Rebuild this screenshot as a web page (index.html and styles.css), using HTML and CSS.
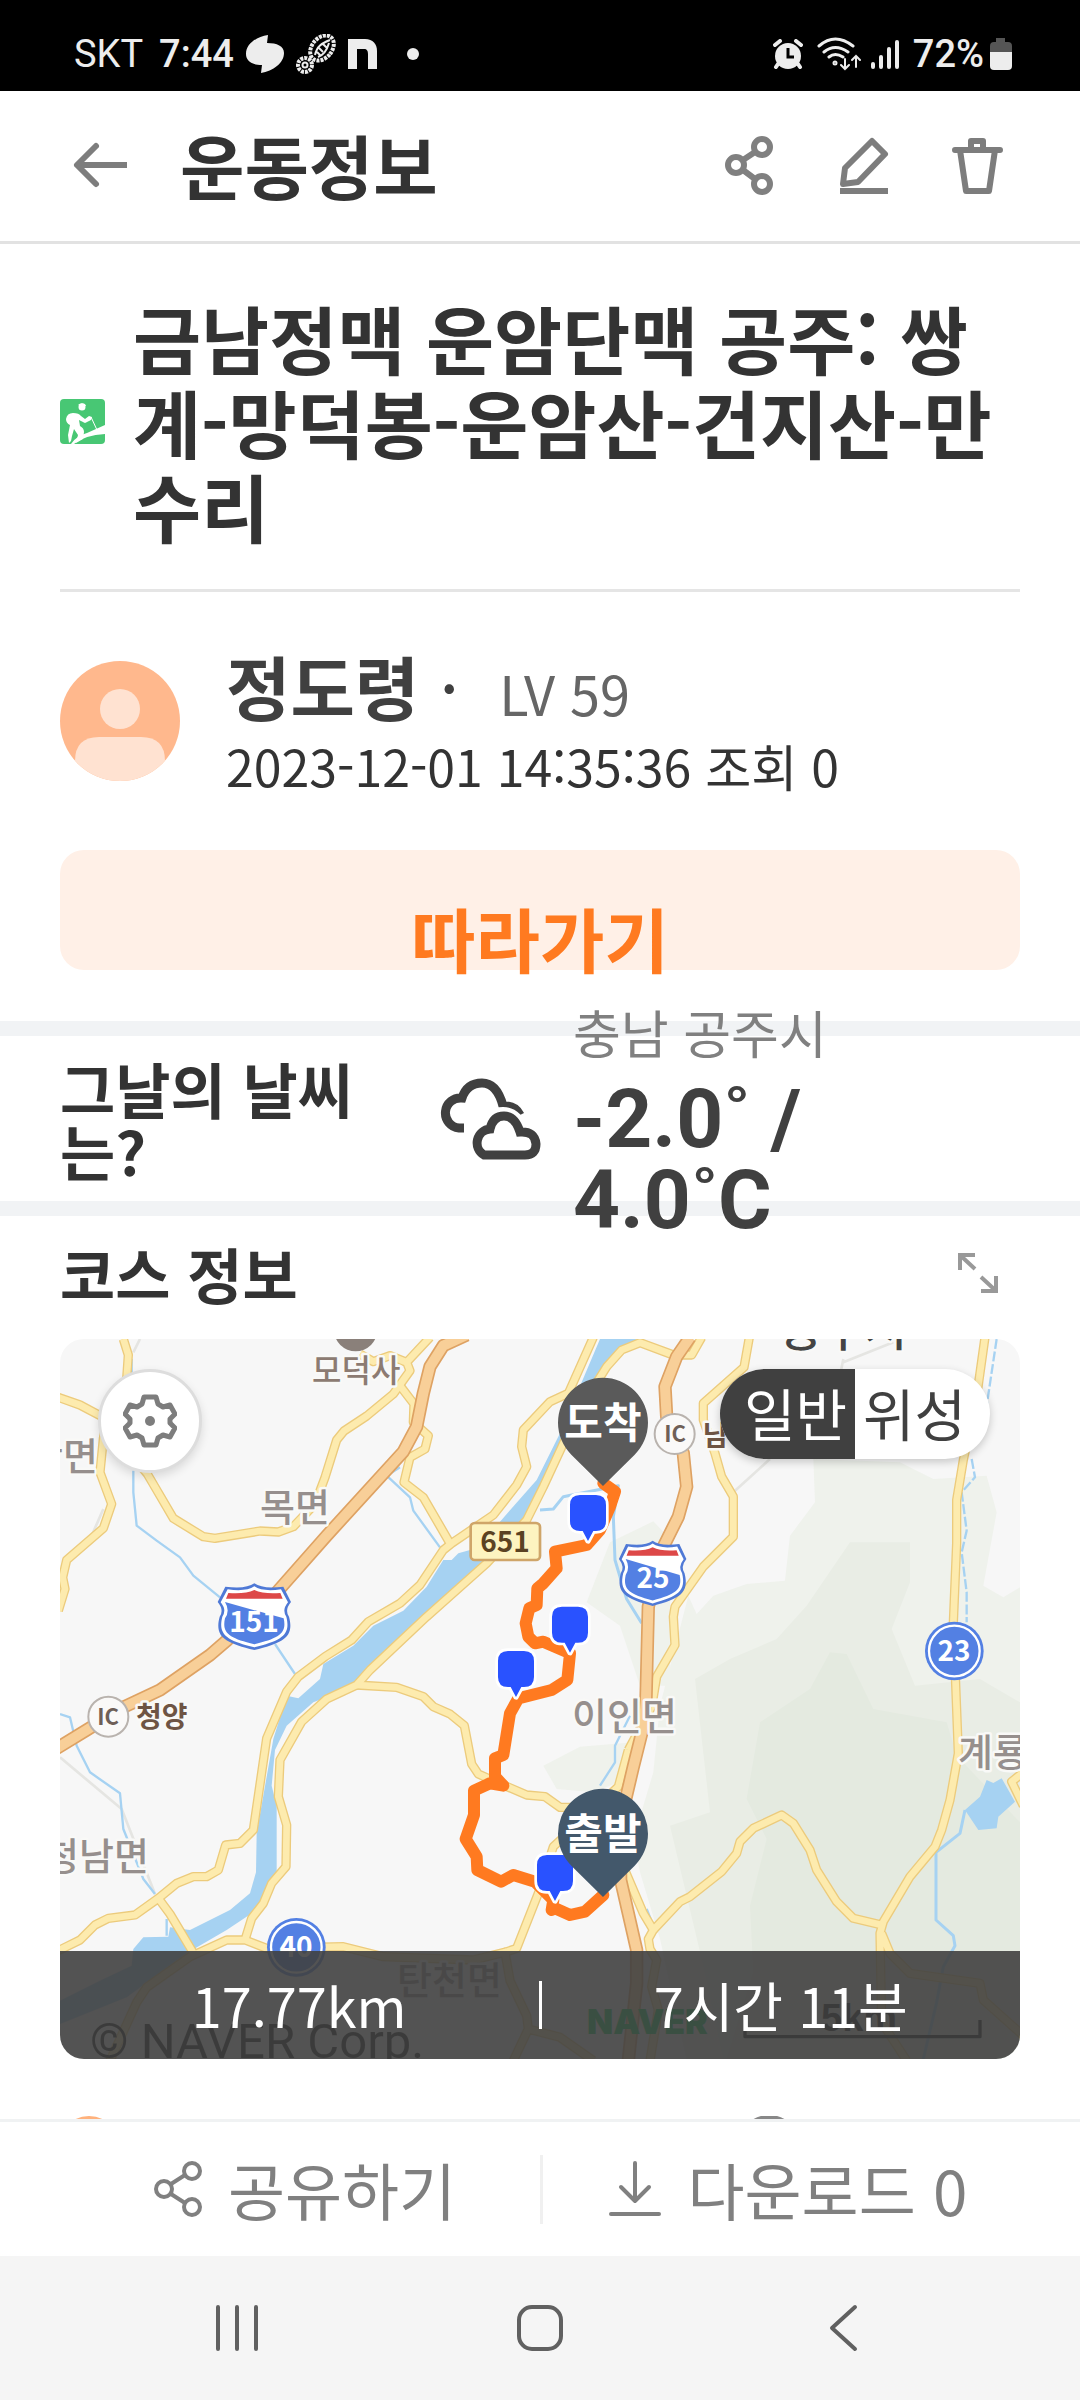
FILE: index.html
```html
<!DOCTYPE html>
<html lang="ko">
<head>
  <meta charset="UTF-8">
  <meta name="viewport" content="width=device-width, initial-scale=1.0">
  <title>운동정보</title>
  <link rel="stylesheet" href="styles.css">
</head>
<body>

  <!-- Phone status bar -->
  <div class="status-bar">
    <div class="status-left">
      <span class="carrier">SKT</span>
      <span class="clock">7:44</span>
      <svg class="status-icon" width="40" height="38" viewBox="0 0 40 38"><path d="M23 0C11 2 1 9 1 19c0 7 6 11 16 11l-1 8c12-2 23-10 23-20 0-7-7-10-17-10z" fill="#ededed"/></svg>
      <svg class="status-icon" width="40" height="40" viewBox="0 0 40 40" fill="none" stroke="#ededed">
        <ellipse cx="26" cy="14" rx="10" ry="14" transform="rotate(40 26 14)" stroke-width="4" stroke-dasharray="3 1"/>
        <path d="M19 21C21 12 26 9 34 6M22 23c6-2 9-7 11-14M23 14l4 4M27 10l4 4M21 18l3 3" stroke-width="2"/>
        <circle cx="9" cy="31" r="7" stroke-width="4" stroke-dasharray="3 1"/>
        <circle cx="9" cy="31" r="2.500" stroke-width="2"/>
      </svg>
      <svg class="status-icon" width="32" height="30" viewBox="0 0 32 30"><path d="M1 30V0h17c8 0 12 5 12 12v18h-9V15c0-3-1-5-4-5h-7v20z" fill="#ededed"/></svg>
      <span class="more-dot"></span>
    </div>
    <div class="status-right">
      <svg width="30" height="30" viewBox="0 0 30 30">
        <circle cx="15" cy="17" r="13" fill="#ededed"/>
        <path d="M2 6l5-4M28 6l-5-4M5 25l-2 3M25 25l2 3" stroke="#ededed" stroke-width="4" stroke-linecap="round"/>
        <path d="M15 9v9h6" fill="none" stroke="#000" stroke-width="3"/>
      </svg>
      <svg class="wifi" width="44" height="34" viewBox="0 0 44 34" fill="none" stroke="#ededed" stroke-width="3" stroke-linecap="round">
        <path d="M2 9q16-14 34 0M7 15q11-9 24 0M12 20q6-5 14 0"/>
        <circle cx="18" cy="26" r="1"/>
        <path d="M28 22v10m-4-4l4 4 4-4M39 30V19m-4 4l4-4 4 4" stroke-width="2"/>
      </svg>
      <svg width="28" height="30" viewBox="0 0 28 30" stroke="#ededed" stroke-width="4" stroke-linecap="round"><path d="M2 25v3M10 18v10M18 10v18M26 3v25"/></svg>
      <span class="battery-level">72%</span>
      <svg width="22" height="32" viewBox="0 0 22 32"><path d="M6 0h9v4h3q4 0 4 4v6H0V8q0-4 4-4h2z" fill="#555"/><path d="M0 14h22v14q0 4-4 4H4q-4 0-4-4z" fill="#ededed"/></svg>
    </div>
  </div>

  <header class="app-bar">
    <button class="icon-button back" aria-label="뒤로">
      <svg width="56" height="56" viewBox="0 0 56 56" fill="none" stroke="#7d7d7d" stroke-width="6" stroke-linejoin="round"><path d="M55 28H6"/><path d="M24 9L5 28l19 19" stroke-linecap="round"/></svg>
    </button>
    <h1>운동정보</h1>
    <div class="actions">
      <button class="icon-button" aria-label="공유">
        <svg width="60" height="60" viewBox="0 0 60 60" fill="none" stroke="#808080" stroke-width="6"><circle cx="42" cy="12" r="8"/><circle cx="16" cy="30" r="8"/><circle cx="42" cy="49" r="8"/><path d="M35 17L23 25M23 35l12 9"/></svg>
      </button>
      <button class="icon-button" aria-label="수정">
        <svg width="60" height="60" viewBox="0 0 60 60" fill="none" stroke="#7d7d7d" stroke-width="6" stroke-linejoin="round"><path d="M38 6l13 13-27 28-15 2 2-16zM6 56h48"/></svg>
      </button>
      <button class="icon-button" aria-label="삭제">
        <svg width="60" height="60" viewBox="0 0 60 60" fill="none" stroke="#7d7d7d" stroke-width="6" stroke-linecap="round" stroke-linejoin="round"><path d="M7 15h45M12 15l6 41h23l6-41M23 14V6h12v8"/></svg>
      </button>
    </div>
  </header>

  <main>
    <section class="summary">
      <div class="course-title">
        <svg class="hiking" width="45" height="45" viewBox="0 0 45 45">
          <rect width="45" height="45" rx="4" fill="#48c774"/>
          <g fill="#fff">
            <circle cx="22" cy="8" r="3.500"/>
            <path d="M18 6q3-3 7-1l1 2h-5z"/>
            <path d="M6 20q1-6 7-6 6 0 8 3l4 3 4-3 3 1-1 3-6 3-6-3 1 6q4 2 4 6l-1 7-7 4 2-8-4-6-2 7-1 5-2 2-1-8 2-10q-4-2-4-6z"/>
            <path d="M11 45q5-8 16-11L45 26v9q-20 1-31 10z"/>
          </g>
          <path d="M31 18l6 13" stroke="#fff"/>
        </svg>
        <h2>금남정맥 운암단맥 공주: 쌍계-망덕봉-운암산-건지산-만수리</h2>
      </div>

      <div class="profile">
        <svg class="avatar" width="120" height="120" viewBox="0 0 120 120">
          <clipPath id="avatarClip"><circle cx="60" cy="60" r="60"/></clipPath>
          <g clip-path="url(#avatarClip)">
            <rect width="120" height="120" fill="#ffb88d"/>
            <circle cx="60" cy="48" r="20" fill="#ffe2d1"/>
            <path d="M15 120v-20q0-24 24-24h42q24 0 24 24v20z" fill="#ffe2d1"/>
          </g>
        </svg>
        <div class="profile-text">
          <p class="profile-name"><strong>정도령</strong><span class="middot">·</span><span class="level">LV 59</span></p>
          <p class="profile-meta">2023-12-01 14:35:36 조회 0</p>
        </div>
      </div>

      <button class="follow">따라가기</button>
    </section>

    <section class="weather">
      <h3>그날의 날씨는?</h3>
      <svg width="102" height="82" viewBox="0 0 102 82" fill="none" stroke="#404040" stroke-width="9">
        <path d="M25 50h-5a15 15 0 0 1 3-30Q28 5 43 5t21 23q12-1 17 9" />
        <path d="M45 77a15 15 0 0 1 4-28q4-11 15-11t18 16q15-1 15 12 0 11-11 11z" fill="#fff" stroke="#fff" stroke-width="18"/>
        <path d="M45 77a14 14 0 0 1 6-26q3-13 14-13t16 16q15-1 16 12 0 11-11 11z"/>
      </svg>
      <div class="weather-text">
        <p class="place">충남 공주시</p>
        <p class="temp">-2.0˚ / 4.0˚C</p>
      </div>
    </section>

    <section class="course">
      <div class="section-head">
        <h3>코스 정보</h3>
        <button class="icon-button" aria-label="크게 보기">
          <svg width="42" height="42" viewBox="0 0 42 42" fill="none" stroke="#999" stroke-width="4"><path d="M3 18V3h15M4 4l14 13M39 24v15H24M38 38L24 25"/></svg>
        </button>
      </div>

      <div class="map">
        <svg class="map-canvas" viewBox="0 0 960 720">
          <defs>
            <g id="shield">
              <path d="M0-100Q-25-82-87-90L-110-44Q-90-20-104 0C-120 60-90 78 0 100 90 78 120 60 104 0Q90-20 110-44L87-90Q25-82 0-100z" fill="#4f79d6"/>
              <path d="M0-91Q-25-74-80-82L-101-43Q-82-20-96 0C-110 55-82 71 0 92 82 71 110 55 96 0Q82-20 101-43L80-82Q25-74 0-91z" fill="#fff"/>
              <path d="M-88-44Q-72-18-88 5C-98 50-75 64 0 83 75 64 98 50 88 5 72-18 88-44z" fill="#5380e3"/>
              <path d="M-85-54l7-17Q-28-67 0-80 28-67 78-71l7 17z" fill="#dd4848"/>
            </g>
            <g id="waypoint">
              <path d="M-24-140h48q30 0 30 30v48q0 30-30 30h-8L0-2l-16-30h-8q-30 0-30-30v-48q0-30 30-30z" fill="#2952ff" stroke="#fff" stroke-width="16" paint-order="stroke" stroke-linejoin="round"/>
            </g>
            <path id="marker" d="M0 0L-95-94A135 135 0 1 1 95-94z"/>
            <g id="roads">
              <path d="M190 0L205 48 200 120 140 230 130 300 120 400 155 495 130 568 20 663 8 715 15 750-5 815M-5 175L60 198 130 235"/>
              <path d="M200 330L262 405 340 538 430 593 465 598 600 576 655 579 700 563 765 495 795 415 830 303 852 276 920 231 1000 165 1050 95 1040 70 1110-5M900 45L940 68 990 50 1040 70"/>
              <path d="M1020 140L1062 195 1060 250 1105 290 1095 330 1050 355 1032 430 1090 475 1170 613"/>
              <path d="M1600-5L1525 163 1470 188 1390 273 1385 323 1400 383 1370 438 1300 528 1175 613 1150 633 1080 738 1020 793 925 848 875 903 795 953 715 1013 680 1058 620 1198 580 1473 540 1513 497 1518 475 1593 440 1613 400 1613 350 1633 295 1678 225 1728 145 1738 105 1758 60 1803-5 1835M295 1678L330 1725 405 1850"/>
              <path d="M1925-5L1895 48 1840 48 1740 11 1685 33 1640 83 1590 163 1515 303 1450 443 1400 543 1280 673 1100 833 930 993 890 1038 800 1080 725 1148 660 1263 655 1373 680 1458 678 1583 635 1633 610 1693 575 1738 555 1803"/>
              <path d="M890 1038L1010 1045 1090 1073 1120 1103 1170 1125 1213 1160 1235 1275 1255 1305 1300 1325 1400 1368 1455 1373 1500 1405 1560 1405"/>
              <path d="M1705 1233L1675 1343 1480 1523 1435 1663 1370 1828 1335 1840 1350 1925 1400 2030 1405 2070 1360 2165M1405 2070L1500 2095 1600 2165"/>
              <path d="M150 2165L230 1990 260 1945 390 1853 500 1803 555 1803 620 1828 850 1823 970 1853 1240 1863 1340 1838"/>
              <path d="M2068-5L2052 85 1930 193 1930 243 1965 343 1985 413 2020 473 2020 593 1930 683 1845 803 1840 833 1845 918 1790 1013 1775 1103 1705 1233"/>
              <path d="M2775-5L2750 173 2710 363 2690 483 2690 613 2680 853 2690 1113 2695 1243 2670 1383 2645 1473 2625 1523 2550 1613 2470 1748 2460 1783 2465 2050 2540 2165M2465 1783L2490 1843 2550 1903 2760 1933 2770 1983 2890 2090"/>
              <path d="M1780 1773L1860 1688 1890 1673 1985 1598 2030 1543 2040 1508 2080 1468 2165 1428 2200 1453 2250 1533 2270 1593 2330 1688 2380 1738 2465 1758"/>
              <path d="M1690 1583L1750 1723 1780 1773 1765 1800 1770 1830 1790 1863 1775 1943 1795 2013 1770 2165M2890 1300L2855 1328 2890 1400"/>
            </g>
            <g id="highways">
              <path d="M1220-12L1150 20 1110 83 1090 163 1070 263 1030 338 800 590 650 760 500 905 450 948 300 1053 190 1105 80 1173-10 1228"/>
              <path d="M1890-5L1850 53 1815 143 1820 233 1870 343 1880 443 1855 533 1810 623 1765 803 1758 1083 1750 1163 1720 1283 1680 1453 1682 1623 1730 1833 1730 1933 1705 2165"/>
            </g>
          </defs>

          <!-- terrain is drawn on a grid three times finer than the labels -->
          <g transform="scale(.33333)" fill="none" stroke-linejoin="round">
            <rect width="2880" height="2160" fill="#f7f7f7"/>
            <g fill="#eff2ec">
              <path d="M2260 360L2265 490 2190 590 2175 725 2060 735 1960 770 1910 825 1885 770 1800 1100 1780 1300 1720 1500 1740 1600 1800 1800 1880 2160H2880V745L2830 775 2770 740 2810 520 2780 410 2620 420 2520 370z"/>
              <path d="M1580 790L1650 610 1780 547 1830 600V1040H1740L1680 860zM1450 1280L1560 1223 1720 1210 1700 1320 1600 1360 1490 1350z"/>
            </g>
            <path d="M2370 610H2550V730L2495 870 2565 1040 2760 1020 2880 1090V2160H1990L1930 1880 1830 1460 1950 1420 1905 1020 2010 960 2150 900 2240 800z" fill="#e9ede5"/>
            <path d="M2310 940L2360 945 2440 1110 2660 1150 2690 1250 2880 1450V2160H2000L2080 1900 2070 1700 2120 1500 2060 1380 2100 1150 2250 1050z" fill="#e4eae0"/>
            <g stroke="#e5e5e2" stroke-width="8"><path d="M240 0L220 40M130 510L95 590M0 1255L185 1410 285 1665M2350 70L2500 10M2350 60L2340 110M2020 460L2130 360"/></g>
            <path d="M1620 0L1500 283 1430 423 1320 548 1230 633 1195 643 1175 663 1150 663 1100 743 1030 815 940 860 880 920 790 975 780 1020 715 1078 680 1070 640 1200 590 1483 588 1600 570 1663 510 1713 390 1773 330 1765 325 1793 250 1795 220 1830 215 1880 120 1925 0 1985V2055L200 1975 380 1843 500 1773 590 1713 650 1603 650 1400 635 1340 645 1233 680 1160 760 1090 890 1040 930 990 1280 660 1400 530 1450 420 1520 290 1640 70 1730 0z" fill="#a6d2f2"/>
            <path d="M2715 1413L2760 1373 2780 1323 2800 1332 2825 1318 2865 1388 2815 1433 2810 1468 2755 1473z" fill="#a6d2f2"/>
            <g stroke="#a6d2f2" stroke-width="7">
              <path d="M215 60V130M220 395V460L230 560 290 605 360 655 400 710 480 775M645 915L705 1005"/>
              <path d="M0 1125L30 1135 50 1220 90 1300 180 1363 190 1470 250 1620 285 1665"/>
              <path d="M1440 513L1480 510 1510 473 1550 465 1600 455 1675 440 1660 533 1665 663 1700 780 1745 853" stroke-width="9"/>
              <path d="M2810 0L2780 200M2735 360L2745 415 2705 460 2720 575 2705 640 2720 760V850" stroke-dasharray="30 8"/>
              <path d="M1020 385L980 410 1050 475 1060 515 1140 625M1710 1130L1665 1220V1270L1620 1340M1760 1710L1780 1760M320 1740V1790"/>
              <path d="M2715 1413L2700 1483 2628 1540V1743L2680 1790 2685 1820 2650 1883 2630 1990 2590 2160" stroke-width="9"/>
            </g>
            <use href="#roads" stroke="#eccb7c" stroke-width="28"/>
            <use href="#roads" stroke="#fdebae" stroke-width="20"/>
            <use href="#highways" stroke="#dea263" stroke-width="40"/>
            <use href="#highways" stroke="#f8cf98" stroke-width="30"/>

            <circle cx="887" cy="-28" r="65" fill="#8a807a"/>
            <g fill="#faf9f8" stroke="#b9b3ae" stroke-width="6"><circle cx="145" cy="1133" r="60"/><circle cx="1844" cy="285" r="60"/></g>
            <use href="#shield" x="583" y="833"/>
            <use href="#shield" transform="translate(1778 703) scale(.92 .98)"/>
            <g fill="#5380e3"><circle cx="2683" cy="936" r="88"/><circle cx="709" cy="1825" r="88"/></g>
            <g stroke="#fff" stroke-width="7"><circle cx="2683" cy="936" r="76"/><circle cx="709" cy="1825" r="76"/></g>
            <rect x="1232" y="552" width="208" height="111" rx="12" fill="#fdf3c0" stroke="#cfa569" stroke-width="8"/>
            <path d="M2055 2043V2093H2760V2043" stroke="#111" stroke-width="10"/>
          </g>

          <g class="town">
            <text x="38" y="131" text-anchor="end">산면</text>
            <text x="200" y="182">목면</text>
            <text x="512" y="391">이인면</text>
            <text x="898" y="427">계룡면</text>
            <text x="89" y="531" text-anchor="end">청남면</text>
            <text x="337" y="655">탄천면</text>
          </g>
          <text class="landmark" x="252" y="43">모덕사</text>
          <text class="city" x="720" y="7">공주시</text>
          <g class="junction">
            <text x="76" y="388">청양</text>
            <text x="643" y="107">남</text>
          </g>
          <g class="ic"><text x="48" y="386">IC</text><text x="615" y="103">IC</text></g>
          <g class="road-number"><text x="194" y="293">151</text><text x="593" y="249">25</text><text x="894" y="322">23</text><text x="236" y="618">40</text></g>
          <text class="road-651" x="445" y="213">651</text>
          <text class="copyright" x="30" y="719">© NAVER Corp.</text>
          <text class="naver" x="527" y="695">NAVER</text>
          <text class="scale" x="761" y="692">5km</text>

          <g transform="scale(.33333)">
            <path d="M1630 1668L1575 1718 1530 1728 1485 1708 1475 1713 1480 1683 1425 1628 1360 1608 1323 1628 1252 1593 1250 1553 1217 1500 1242 1428V1355L1290 1333 1330 1340 1305 1313V1258L1330 1248 1350 1123 1375 1078 1475 1053 1522 1023 1530 943 1450 908 1425 913 1405 893 1397 853 1408 808 1430 798 1432 748 1450 733 1490 688 1485 638 1580 618 1620 573 1650 503 1665 458 1630 433" fill="none" stroke="#ff7a20" stroke-width="36" stroke-linejoin="round" stroke-linecap="round"/>
            <use href="#waypoint" x="1584" y="608"/>
            <use href="#waypoint" x="1530" y="943"/>
            <use href="#waypoint" x="1368" y="1076"/>
            <use href="#waypoint" x="1485" y="1688"/>
            <use href="#marker" x="1629" y="441" fill="#5a5a5a"/>
            <use href="#marker" x="1629" y="1674" fill="#43586b"/>
          </g>
          <g class="marker-label"><text x="543" y="99">도착</text><text x="543" y="510">출발</text></g>
        </svg>

        <button class="map-settings" aria-label="지도 설정">
          <svg width="54" height="54" viewBox="0 0 54 54" fill="none" stroke="#7d7d7d" stroke-width="5" stroke-linejoin="round"><path d="M21 3h12l2 7 5 3 7-2 5 9-5 5v4l5 5-5 9-7-2-5 3-2 7H21l-2-7-5-3-7 2-5-9 5-5v-4l-5-5 5-9 7 2 5-3z"/><circle cx="27" cy="27" r="5" fill="#7d7d7d" stroke="none"/></svg>
        </button>
        <div class="map-type">
          <button class="selected">일반</button>
          <button>위성</button>
        </div>
        <div class="map-stats">
          <span>17.77km</span>
          <span>7시간 11분</span>
        </div>
      </div>

      <div class="details">
        <svg width="60" height="60" viewBox="0 0 60 60" fill="none" stroke="#ffb27d" stroke-width="4"><circle cx="29" cy="30" r="28"/></svg>
        <svg width="60" height="60" viewBox="0 0 60 60" fill="none" stroke="#888" stroke-width="6"><circle cx="29" cy="30" r="28"/></svg>
      </div>
    </section>
  </main>

  <footer class="bottom-bar">
    <button>
      <svg width="48" height="56" viewBox="0 0 48 56" fill="none" stroke="#808080" stroke-width="4"><circle cx="38" cy="10" r="8"/><circle cx="10" cy="28" r="8"/><circle cx="38" cy="46" r="8"/><path d="M31 14L17 23M17 33l14 9"/></svg>
      <span>공유하기</span>
    </button>
    <button>
      <svg width="54" height="56" viewBox="0 0 54 56" fill="none" stroke="#808080" stroke-width="4" stroke-linecap="round" stroke-linejoin="round"><path d="M27 2v38M13 26l14 14 14-14M3 53h48"/></svg>
      <span>다운로드 0</span>
    </button>
  </footer>

  <nav class="system-nav">
    <button aria-label="최근 앱"><svg width="48" height="48" viewBox="0 0 48 48" stroke="#606060" stroke-width="4" stroke-linecap="round"><path d="M5 3v42M24 3v42M43 3v42"/></svg></button>
    <button aria-label="홈"><svg width="48" height="48" viewBox="0 0 48 48" fill="none" stroke="#606060" stroke-width="4"><rect x="3" y="3" width="42" height="42" rx="13"/></svg></button>
    <button aria-label="뒤로"><svg width="48" height="48" viewBox="0 0 48 48" fill="none" stroke="#606060" stroke-width="4" stroke-linecap="round" stroke-linejoin="round"><path d="M36 3L13 24l23 21"/></svg></button>
  </nav>

</body>
</html>
```
FILE: styles.css
```css
* {
  margin: 0;
  padding: 0;
  box-sizing: border-box;
}

body {
  font-family: "Noto Sans CJK KR", sans-serif;
  background-color: #fff;
  color: #333;
  display: flex;
  flex-direction: column;
  height: 100vh;
}

svg {
  display: block;
  flex: none;
}

button {
  font-family: inherit;
  color: inherit;
  background: none;
  border: none;
}

/* Phone status bar */
.status-bar {
  flex: none;
  height: 91px;
  padding: 16px 68px 0 74px;
  display: flex;
  justify-content: space-between;
  align-items: center;
  background-color: #000;
  color: #ededed;
  font-family: Roboto, sans-serif;
  font-size: 38px;
  line-height: 44px;
}

.status-left,
.status-right {
  display: flex;
  align-items: center;
}

.carrier {
  margin-right: 16px;
}

.clock,
.battery-level {
  font-weight: 500;
}

.status-icon {
  margin-left: 11px;
}

.more-dot {
  width: 12px;
  height: 12px;
  margin-left: 28px;
  border-radius: 50%;
  background-color: #ededed;
}

.status-right {
  gap: 6px;
}

.wifi {
  margin: 0 4px 0 8px;
}

.battery-level {
  margin-left: 8px;
}

/* App bar */
.app-bar {
  flex: none;
  height: 153px;
  padding: 0 72px 2px;
  display: flex;
  align-items: center;
  border-bottom: 3px solid #e2e2e2;
}

.app-bar h1 {
  margin-left: 52px;
  font-size: 70px;
  line-height: 84px;
}

.actions {
  display: flex;
  gap: 54px;
  margin-left: auto;
}

main {
  flex: 1;
  min-height: 0;
  overflow: hidden;
}

/* Title, author and follow button */
.summary {
  padding: 51px 60px;
}

.course-title {
  display: flex;
  align-items: center;
  padding-bottom: 42px;
  border-bottom: 3px solid #e5e5e5;
}

.course-title h2 {
  flex: 1;
  margin-left: 28px;
  font-size: 74px;
  line-height: 84px;
  word-break: break-all;
}

.profile {
  display: flex;
  align-items: center;
  padding: 53px 0 54px;
}

.profile-text {
  margin-left: 46px;
}

.profile-name {
  display: flex;
  align-items: baseline;
  font-size: 70px;
  line-height: 82px;
  color: #404040;
}

.middot {
  width: 60px;
  margin-right: 20px;
  text-align: center;
}

.level {
  font-size: 54px;
  color: #666;
}

.profile-meta {
  font-size: 50px;
  line-height: 62px;
}

.follow {
  display: block;
  width: 100%;
  height: 120px;
  padding-top: 56px;
  border-radius: 24px;
  background-color: #fff0e7;
  color: #ff7a20;
  font-size: 70px;
  font-weight: bold;
  line-height: 60px;
}

/* Weather */
.weather {
  padding: 0 60px;
  display: grid;
  grid-template-columns: 379px 134px 260px;
  grid-template-rows: 165px;
  align-items: center;
  border-top: 15px solid #f1f3f5;
  border-bottom: 15px solid #f1f3f5;
}

.weather h3 {
  width: 310px;
  font-size: 60px;
  line-height: 62px;
  word-break: break-all;
}

.place {
  margin-bottom: 12px;
  color: #808080;
  font-size: 52px;
  line-height: 70px;
}

.temp {
  color: #404040;
  font-family: Roboto, sans-serif;
  font-size: 82px;
  font-weight: bold;
  line-height: 81px;
}

/* Course map */
.course {
  padding: 0 60px;
}

.section-head {
  height: 123px;
  padding: 0 21px 10px 0;
  display: flex;
  justify-content: space-between;
  align-items: center;
}

.section-head h3 {
  font-size: 60px;
  line-height: 62px;
}

.map {
  position: relative;
  border-radius: 24px;
  overflow: hidden;
}

.map-canvas {
  width: 100%;
  height: auto;
}

.map-canvas text {
  font-family: "Noto Sans CJK KR", sans-serif;
  paint-order: stroke;
  stroke: #f9f9f7;
  stroke-width: 5px;
  stroke-linejoin: round;
}

.map-canvas .town text {
  font-size: 38px;
  font-weight: 500;
  fill: #968f8d;
}

.map-canvas .landmark {
  font-size: 32px;
  font-weight: 500;
  fill: #8c7b72;
}

.map-canvas .city {
  font-size: 46px;
  font-weight: 500;
  fill: #444;
}

.map-canvas .junction text {
  font-size: 28px;
  font-weight: bold;
  fill: #6e5443;
}

.map-canvas .ic text {
  font-size: 22px;
  font-weight: bold;
  text-anchor: middle;
  stroke: none;
  fill: #6e5f57;
}

.map-canvas .road-number text {
  font-size: 28px;
  font-weight: bold;
  text-anchor: middle;
  stroke: none;
  fill: #fff;
}

.map-canvas .road-651 {
  font-size: 28px;
  font-weight: bold;
  text-anchor: middle;
  stroke: none;
  fill: #5b4222;
}

.map-canvas .copyright {
  font-family: Roboto, sans-serif;
  font-size: 49px;
  stroke: none;
  fill: #111;
}

.map-canvas .naver {
  font-family: Inter, sans-serif;
  font-size: 34px;
  font-weight: 900;
  stroke: none;
  fill: #00d050;
}

.map-canvas .scale {
  font-family: "Liberation Sans", sans-serif;
  font-size: 38px;
  font-weight: bold;
  stroke: none;
  fill: #111;
}

.map-canvas .marker-label text {
  font-size: 42px;
  font-weight: bold;
  text-anchor: middle;
  stroke: none;
  fill: #fff;
}

.map-settings {
  position: absolute;
  top: 30px;
  left: 38px;
  width: 104px;
  height: 104px;
  display: flex;
  justify-content: center;
  align-items: center;
  border: 3px solid #ddd;
  border-radius: 50%;
  background-color: #fff;
  box-shadow: 0 4px 10px rgba(0, 0, 0, 0.12);
}

.map-type {
  position: absolute;
  top: 30px;
  right: 30px;
  display: flex;
  border-radius: 45px;
  overflow: hidden;
  background-color: #fff;
  box-shadow: 0 3px 9px rgba(0, 0, 0, 0.2);
}

.map-type button {
  width: 135px;
  height: 90px;
  padding: 0 16px 4px 0;
  font-size: 56px;
  line-height: 86px;
  color: #404040;
}

.map-type .selected {
  padding: 0 0 4px 16px;
  background-color: #404040;
  color: #fff;
}

.map-stats {
  position: absolute;
  left: 0;
  right: 0;
  bottom: 0;
  height: 108px;
  display: flex;
  align-items: center;
  background-color: rgba(64, 64, 64, 0.9);
  color: #fff;
  font-size: 54px;
  line-height: 48px;
}

.map-stats span {
  flex: 1;
  text-align: center;
}

.map-stats span + span {
  border-left: 3px solid #fff;
}

.details {
  display: grid;
  grid-template-columns: 680px 1fr;
  padding-top: 57px;
}

/* Bottom actions */
.bottom-bar {
  flex: none;
  height: 137px;
  display: grid;
  grid-template-columns: 1fr 1fr;
  align-items: center;
  border-top: 3px solid #f0f2f3;
  background-color: #fff;
}

.bottom-bar button {
  height: 69px;
  display: flex;
  justify-content: center;
  align-items: center;
  gap: 26px;
  padding-left: 70px;
  color: #808080;
  font-size: 62px;
  line-height: 69px;
}

.bottom-bar button + button {
  padding: 0 48px 0 0;
  border-left: 3px solid #f0f0f0;
}

/* System navigation */
.system-nav {
  flex: none;
  height: 144px;
  padding: 0 86px;
  display: flex;
  align-items: center;
  background-color: #f5f5f5;
}

.system-nav button {
  flex: 1;
  display: flex;
  justify-content: center;
}
```
